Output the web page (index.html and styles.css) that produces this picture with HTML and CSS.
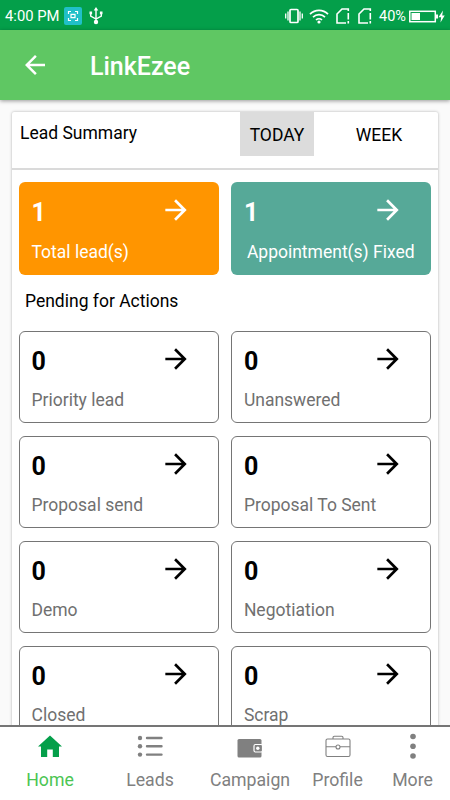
FILE: index.html
```html
<!DOCTYPE html>
<html lang="en">
<head>
<meta charset="utf-8">
<title>LinkEzee</title>
<meta name="viewport" content="width=device-width, initial-scale=1">
<link rel="stylesheet" href="styles.css">
</head>
<body>

<svg class="defs">
  <symbol id="arrow" viewBox="0 0 24 24"><path d="M12 4l-1.41 1.41L16.17 11H4v2h12.17l-5.58 5.59L12 20l8-8z"/></symbol>
  <symbol id="sim" viewBox="0 0 14 16"><path d="M12.3 3V1H6L1 6v9h9M12.3 5v6.5M12.3 13v2.5" fill="none" stroke="#fff" stroke-width="1.6"/></symbol>
</svg>

<div class="status">
  <span class="time">4:00 PM</span>
  <svg class="shot" width="18" height="18" viewBox="0 0 18 18">
    <rect width="18" height="18" rx="2" fill="#20c0c8"/>
    <path d="M4.5 7V4.5H7M11 4.5h2.500V7M13.500 11v2.500H11M7 13.500H4.500V11M7 7.300h4v3.400H7z" fill="none" stroke="#fff" stroke-width="1.200"/>
  </svg>
  <svg class="usb" width="14" height="18" viewBox="0 0 14 18">
    <path d="M7 15V2M1.700 6v3.200L7 12l5.300-2.800V6" fill="none" stroke="#fff" stroke-width="1.400"/>
    <path d="M7 0l2.300 3.500H4.700zM.500 4.500h2.600v2.700H.500zM10.900 4.500h2.600v2.700h-2.600z" fill="#fff"/>
    <circle cx="7" cy="15" r="2.200" fill="#fff"/>
  </svg>
  <svg class="vibrate" width="18" height="16" viewBox="0 0 18 16" fill="none" stroke="#fff">
    <rect x="5" y="1.500" width="8" height="13" rx="1" stroke-width="1.700"/>
    <path d="M3 3.500v9M.700 5.500v5M15 3.500v9M17.300 5.500v5" stroke-width="1.300"/>
  </svg>
  <svg class="wifi" width="20" height="16" viewBox="0 0 20 16" fill="none" stroke="#fff" stroke-width="1.700">
    <path d="M1 6.200a12.500 12.500 0 0 1 18 0M4 9.200a8.500 8.500 0 0 1 12 0M7 12a4.300 4.300 0 0 1 6 0"/>
    <circle cx="10" cy="14" r="1.600" fill="#fff" stroke="none"/>
  </svg>
  <svg class="sim" width="14" height="16"><use href="#sim"/></svg>
  <svg class="sim" width="14" height="16"><use href="#sim"/></svg>
  <span class="percent">40%</span>
  <svg class="battery" width="36" height="13" viewBox="0 0 36 13">
    <rect x=".800" y="1.300" width="25.500" height="10.400" fill="none" stroke="#fff" stroke-width="1.500"/>
    <path d="M2.500 3h8.500v7H2.500zM27 4.500h2v4h-2zM34 .500l-4.500 6.800h2.600L31.500 12.500l4.200-7h-2.500z" fill="#fff"/>
  </svg>
</div>

<header class="appbar">
  <svg class="back" width="30" height="30" viewBox="0 0 24 24"><path d="M20 11H7.830l5.590-5.590L12 4l-8 8 8 8 1.410-1.410L7.830 13H20z"/></svg>
  <h1>LinkEzee</h1>
</header>

<main class="content">
  <section class="panel">
    <div class="summary">
      <h2>Lead Summary</h2>
      <button class="tab active">TODAY</button>
      <button class="tab">WEEK</button>
    </div>

    <div class="grid totals">
      <div class="box orange"><b>1</b><svg class="arrow"><use href="#arrow"/></svg><p>Total lead(s)</p></div>
      <div class="box teal"><b>1</b><svg class="arrow"><use href="#arrow"/></svg><p>Appointment(s) Fixed</p></div>
    </div>

    <h3>Pending for Actions</h3>

    <div class="grid">
      <div class="box"><b>0</b><svg class="arrow"><use href="#arrow"/></svg><p>Priority lead</p></div>
      <div class="box"><b>0</b><svg class="arrow"><use href="#arrow"/></svg><p>Unanswered</p></div>
      <div class="box"><b>0</b><svg class="arrow"><use href="#arrow"/></svg><p>Proposal send</p></div>
      <div class="box"><b>0</b><svg class="arrow"><use href="#arrow"/></svg><p>Proposal To Sent</p></div>
      <div class="box"><b>0</b><svg class="arrow"><use href="#arrow"/></svg><p>Demo</p></div>
      <div class="box"><b>0</b><svg class="arrow"><use href="#arrow"/></svg><p>Negotiation</p></div>
      <div class="box"><b>0</b><svg class="arrow"><use href="#arrow"/></svg><p>Closed</p></div>
      <div class="box"><b>0</b><svg class="arrow"><use href="#arrow"/></svg><p>Scrap</p></div>
    </div>
  </section>
</main>

<nav class="bottom">
  <a class="active">
    <svg width="26" height="26" viewBox="0 0 26 26"><path d="M13 2.500L1 13.500h3V24h6.200v-7.500h5.600V24H22V13.500h3z" fill="#049f4a"/></svg>
    Home
  </a>
  <a>
    <svg width="26" height="26" viewBox="0 0 26 26" fill="#808080">
      <circle cx="3" cy="5" r="2.200"/><circle cx="3" cy="13.300" r="2.200"/><circle cx="3" cy="21.600" r="2.200"/>
      <path d="M10 5h14.500M10 13.300h14.500M10 21.600h14.500" stroke="#808080" stroke-width="2.400" stroke-linecap="round"/>
    </svg>
    Leads
  </a>
  <a>
    <svg width="26" height="26" viewBox="0 0 26 26">
      <rect x=".500" y="6" width="24" height="18.500" rx="1.500" fill="#808080"/>
      <rect x="17" y="11.500" width="8.500" height="7.500" rx="1.500" fill="#808080" stroke="#fff" stroke-width="1.200"/>
      <circle cx="20.800" cy="15.300" r="1.700" fill="#fff"/>
    </svg>
    Campaign
  </a>
  <a class="small">
    <svg width="26" height="26" viewBox="0 0 26 26" fill="none" stroke="#808080" stroke-width="1.100">
      <rect x="1" y="6" width="24" height="17.500" rx="1.500"/>
      <path d="M8 6V4.500q0-1.300 1.300-1.300h7.400q1.300 0 1.300 1.300V6M1 13.800h10M15 13.800h10"/>
      <circle cx="13" cy="14" r="2"/>
    </svg>
    Profile
  </a>
  <a class="small">
    <svg width="26" height="26" viewBox="0 0 26 26" fill="#808080"><circle cx="13" cy="3.500" r="2.800"/><circle cx="13" cy="13.300" r="2.800"/><circle cx="13" cy="23" r="2.800"/></svg>
    More
  </a>
</nav>

</body>
</html>
```
FILE: styles.css
```css
* {
  box-sizing: border-box;
}

body {
  margin: 0;
  height: 800px;
  overflow: hidden;
  display: flex;
  flex-direction: column;
  font-family: Roboto, "Liberation Sans", sans-serif;
  font-size: 17.5px;
  color: #000;
  background: #fafafa;
}

h1, h2, h3, p {
  margin: 0;
  font-weight: normal;
}

svg {
  display: block;
  flex: none;
}

.defs {
  position: absolute;
  width: 0;
  height: 0;
}

/* phone status bar */
.status {
  flex: none;
  height: 30px;
  display: flex;
  align-items: center;
  padding: 2px 10px 0 5px;
  background: #049f4a;
  color: #fff;
  font-size: 14.8px;
}

.time { width: 59px; white-space: nowrap; }
.usb { margin-left: 7px; }
.vibrate { margin-left: auto; }
.wifi { margin-left: 6px; }
.sim { margin-left: 8px; }
.wifi + .sim { margin-left: 7px; }
.percent { width: 28px; margin: 0 2px 0 7px; font-size: 14.5px; }
.battery { margin-right: -5px; }

.appbar {
  flex: none;
  height: 70px;
  display: flex;
  align-items: center;
  padding-left: 20px;
  background: #5fc763;
  color: #fff;
  box-shadow: 0 1px 4px rgba(0, 0, 0, 0.4);
  z-index: 1;
}

.back {
  fill: #fff;
}

.appbar h1 {
  margin-left: 40px;
  font-size: 25px;
  font-weight: 500;
  line-height: 30px;
  padding-top: 3px;
}

.content {
  flex: 1;
  min-height: 0;
  overflow: hidden;
  padding: 12px 12px 0;
}

.panel {
  height: 700px;
  background: #fff;
  border-radius: 2px;
  box-shadow: 0 0 3px rgba(0, 0, 0, 0.3);
}

.summary {
  display: flex;
  height: 58px;
  border-bottom: 2px solid #dadada;
}

.summary h2 {
  flex: none;
  width: 228px;
  padding: 10px 0 0 8px;
  font-size: 17.5px;
  line-height: 22px;
}

.tab {
  flex: none;
  width: 74px;
  height: 44px;
  margin-right: 28px;
  padding: 2px 0 0;
  border: none;
  background: none;
  font-family: inherit;
  font-size: 17.5px;
  color: #000;
}

.tab + .tab {
  margin-right: 0;
}

.tab.active {
  background: #dcdcdc;
}

.grid {
  display: grid;
  grid-template-columns: 200px 200px;
  gap: 13px 12.4px;
  padding-left: 7px;
}

.totals {
  padding-top: 12px;
}

.box {
  height: 92px;
  display: grid;
  grid-template-columns: 1fr 32px;
  grid-template-rows: 47px 21px;
  padding: 11px 26px 0 11.5px;
  border: 1px solid #757575;
  border-radius: 6px;
}

.box b {
  font-size: 25px;
  line-height: 38px;
}

.box p {
  grid-column: 1 / 3;
  line-height: 21px;
  color: #707070;
  white-space: nowrap;
}

.arrow {
  width: 32px;
  height: 32px;
}

.orange, .teal {
  height: 93px;
  grid-template-rows: 48px 21px;
  border: none;
  padding: 12px 27px 0 12.5px;
  color: #fff;
  fill: #fff;
}

.orange { background: #ff9500; }
.teal { background: #56a998; }
.teal p { padding-left: 3px; }
.orange p, .teal p { color: #fff; }

h3 {
  height: 56px;
  padding: 15px 0 0 13px;
  font-size: 17.5px;
  line-height: 22px;
}

/* bottom navigation */
.bottom {
  flex: none;
  height: 75px;
  display: flex;
  border-top: 2px solid #757575;
  background: #fff;
  z-index: 1;
}

.bottom a {
  width: 100px;
  display: flex;
  flex-direction: column;
  align-items: center;
  gap: 11px;
  padding-top: 6px;
  font-size: 17.7px;
  line-height: 21px;
  color: #808080;
}

.bottom a.small { width: 75px; }
.bottom a.active { color: #4cc553; }
```
